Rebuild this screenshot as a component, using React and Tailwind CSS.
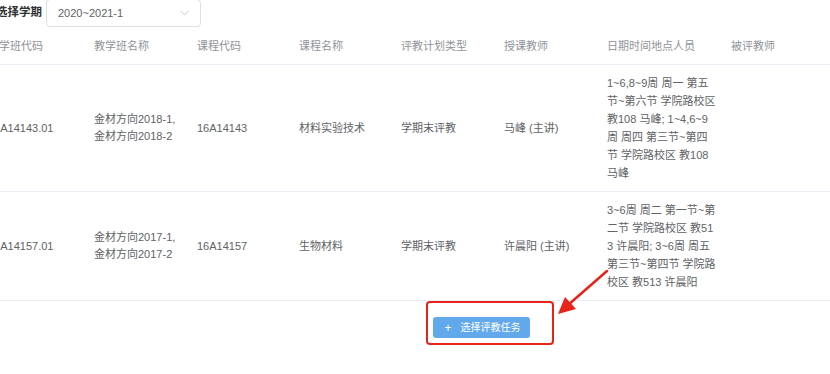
import React from "react";

const rows = [
  {
    classCode: "16A14143.01",
    className: ["金材方向2018-1,", "金材方向2018-2"],
    courseCode: "16A14143",
    courseName: "材料实验技术",
    planType: "学期末评教",
    teacher: "马峰 (主讲)",
    schedule: [
      "1~6,8~9周 周一 第五",
      "节~第六节 学院路校区",
      "教108 马峰; 1~4,6~9",
      "周 周四 第三节~第四",
      "节 学院路校区 教108",
      "马峰",
    ],
  },
  {
    classCode: "16A14157.01",
    className: ["金材方向2017-1,", "金材方向2017-2"],
    courseCode: "16A14157",
    courseName: "生物材料",
    planType: "学期末评教",
    teacher: "许晨阳 (主讲)",
    schedule: [
      "3~6周 周二 第一节~第",
      "二节 学院路校区 教51",
      "3 许晨阳; 3~6周 周五",
      "第三节~第四节 学院路",
      "校区 教513 许晨阳",
    ],
  },
];

const headers = ["教学班代码", "教学班名称", "课程代码", "课程名称", "评教计划类型", "授课教师", "日期时间地点人员", "被评教师"];

export default function App() {
  return (
    <div
      className="relative w-[830px] h-[374px] overflow-hidden bg-white text-[11px] text-[#606266]"
      style={{ fontFamily: '"Liberation Sans", "Noto Sans CJK SC", sans-serif' }}
    >
      {/* 学期选择 */}
      <div className="flex items-center h-[28px] -mt-px ml-[-4px]">
        <span className="text-[11.5px] font-bold text-[#303133] whitespace-nowrap">选择学期</span>
        <div className="ml-[4px] w-[155px] h-[28px] border border-[#dcdfe6] rounded-[4px] flex items-center justify-between px-[11px]">
          <span className="text-[#606266] text-[11px]">2020~2021-1</span>
          <svg width="9" height="6" viewBox="0 0 9 6" className="text-[#c0c4cc]">
            <path d="M0.5 0.8 L4.5 4.8 L8.5 0.8" fill="none" stroke="currentColor" strokeWidth="0.9" />
          </svg>
        </div>
      </div>

      {/* 表格 */}
      <table className="ml-[-22px] mt-[1px] table-fixed border-collapse w-[863px]">
        <colgroup>
          <col className="w-[106px]" />
          <col className="w-[103px]" />
          <col className="w-[102px]" />
          <col className="w-[102px]" />
          <col className="w-[103px]" />
          <col className="w-[103px]" />
          <col className="w-[124px]" />
          <col className="w-[120px]" />
        </colgroup>
        <thead>
          <tr className="border-b border-[#ebeef5]">
            {headers.map((h) => (
              <th key={h} className="px-[10px] py-[9px] text-left font-normal text-[#909399] leading-[18px] whitespace-nowrap">
                {h}
              </th>
            ))}
          </tr>
        </thead>
        <tbody>
          {rows.map((r) => (
            <tr key={r.classCode} className="border-b border-[#ebeef5]">
              <td className="px-[10px] py-[9px] leading-[18px] whitespace-nowrap">{r.classCode}</td>
              <td className="px-[10px] py-[9px] leading-[17px] whitespace-nowrap">
                {r.className.map((l) => (
                  <div key={l}>{l}</div>
                ))}
              </td>
              <td className="px-[10px] py-[9px] leading-[18px]">{r.courseCode}</td>
              <td className="px-[10px] py-[9px] leading-[18px]">{r.courseName}</td>
              <td className="px-[10px] py-[9px] leading-[18px]">{r.planType}</td>
              <td className="px-[10px] py-[9px] leading-[18px] whitespace-nowrap">{r.teacher}</td>
              <td className="px-[10px] py-[9px] leading-[18px] whitespace-nowrap">
                {r.schedule.map((l) => (
                  <div key={l}>{l}</div>
                ))}
              </td>
              <td className="px-[10px] py-[9px]"></td>
            </tr>
          ))}
        </tbody>
      </table>

      {/* 选择按钮 */}
      <div className="pt-[16px] pl-[433px]">
        <button className="w-[97px] h-[21px] rounded-[3px] bg-[#62a9ec] text-white text-[10px] flex items-center justify-center gap-[9px] pl-[2px]">
          <span className="text-[12px] leading-none font-light">+</span>
          <span>选择评教任务</span>
        </button>
      </div>

      {/* 红色标注 */}
      <div className="absolute left-[426px] top-[301px] w-[128px] h-[44px] border-2 border-[#e8231a] rounded-[4px]"></div>
      <svg className="absolute left-[550px] top-[262px]" width="70" height="60" viewBox="0 0 70 60">
        <path d="M57 9 L18 43" stroke="#e8231a" strokeWidth="2.5" strokeLinecap="round" />
        <path d="M8 52 L15 35 L26 47 Z" fill="#e8231a" />
      </svg>
    </div>
  );
}
